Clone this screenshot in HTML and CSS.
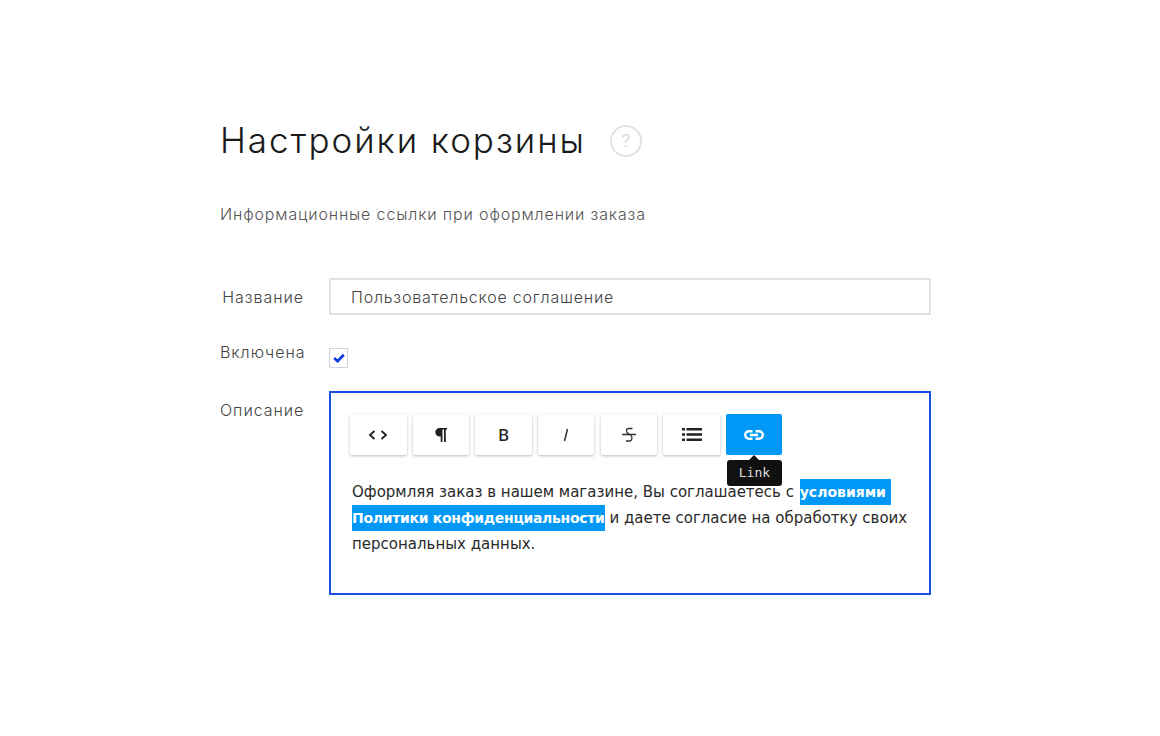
FILE: index.html
```html
<!DOCTYPE html>
<html lang="ru">
<head>
<meta charset="utf-8">
<title>Настройки корзины</title>
<link rel="stylesheet" href="styles.css">
</head>
<body>
<main class="page">
  <header class="title-row">
    <h1 class="title">Настройки корзины</h1>
    <span class="help">?</span>
  </header>
  <p class="subtitle">Информационные ссылки при оформлении заказа</p>
  <div class="form">
    <div class="row row-name">
      <label class="label">Название</label>
      <div class="input">Пользовательское соглашение</div>
    </div>
    <div class="row row-check">
      <label class="label">Включена</label>
      <span class="checkbox">
        <svg width="12" height="10" viewBox="0 0 12 10"><path d="M1.2 5 4.600 8.200 10.800 1.800" fill="none" stroke="#0b3be8" stroke-width="2.700"/></svg>
      </span>
    </div>
    <div class="row row-desc">
      <label class="label label-desc">Описание</label>
      <div class="editor">
        <div class="toolbar">
          <button class="tool">
            <svg width="20" height="12" viewBox="0 0 20 12"><path d="M6.5 2 2 6l4.500 4M13.500 2 18 6l-4.500 4" fill="none" stroke="#222" stroke-width="1.800"/></svg>
          </button>
          <button class="tool">
            <svg width="12" height="14" viewBox="0 0 12 14"><path d="M4.500 0H12v1.500h-1.200V14H9V1.500H7.500V14H5.700V8.400H4.500a4.200 4.200 0 0 1 0-8.400Z" fill="#222"/></svg>
          </button>
          <button class="tool tool-text">B</button>
          <button class="tool">
            <svg width="8" height="14" viewBox="0 0 8 14"><path d="M5.500 1 2.500 13" fill="none" stroke="#333" stroke-width="1.500"/></svg>
          </button>
          <button class="tool">
            <svg width="16" height="16" viewBox="0 0 16 16"><path d="M11.500 1.500H7.500C5 1.500 4.500 5 7.500 6.500L9.500 8c2.500 1.500 1.500 6-1 6H5M1 7.500h14" fill="none" stroke="#333" stroke-width="1.300"/></svg>
          </button>
          <button class="tool">
            <svg width="20" height="13" viewBox="0 0 20 13"><path d="M0 0h3v2.500H0zM0 5.250h3v2.500H0zM0 10.500h3V13H0zM4.500 0H20v2.500H4.500zM4.500 5.250H20v2.500H4.500zM4.500 10.500H20V13H4.500z" fill="#222"/></svg>
          </button>
          <div class="tool-wrap">
            <button class="tool tool-active">
              <svg width="20" height="10" viewBox="0 0 20 10"><path d="M8.500 1.200H5a3.800 3.800 0 0 0 0 7.600h3.500M11.500 1.200H15a3.800 3.800 0 0 1 0 7.600h-3.500M6 5h8" fill="none" stroke="#fff" stroke-width="2.400"/></svg>
            </button>
            <span class="tooltip">Link</span>
          </div>
        </div>
        <p class="content">Оформляя заказ в нашем магазине, Вы соглашаетесь с <a class="link link-first">условиями</a> <a class="link link-second">Политики конфиденциальности</a> и даете согласие на обработку своих персональных данных.</p>
      </div>
    </div>
  </div>
</main>
</body>
</html>
```

FILE: styles.css
```css
* { box-sizing: border-box; }
html, body { margin: 0; padding: 0; background: #fff; }
body { width: 1160px; height: 736px; overflow: hidden; font-family: "Inter", "Liberation Sans", sans-serif; color: #222; }
.page { padding: 117px 0 0 220px; width: 931px; }
.title-row { display: flex; align-items: center; height: 46px; gap: 24px; }
.title { margin: 0; font-weight: 300; font-size: 35px; letter-spacing: 1.950px; line-height: 46px; color: #1a1a1a; }
.help { width: 32px; height: 32px; margin-top: 2px; border: 2px solid #e2e2e2; border-radius: 50%; display: flex; align-items: center; justify-content: center; color: #d0d0d0; font-size: 17px; font-weight: 300; }
.subtitle { margin: 39px 0 0; font-size: 16px; font-weight: 300; line-height: 24px; color: #555; letter-spacing: 0.850px; }
.form { margin-top: 52px; display: flex; flex-direction: column; }
.row { display: flex; gap: 25px; }
.label { width: 84px; flex: none; text-align: right; font-size: 16px; font-weight: 300; color: #444; line-height: 24px; white-space: nowrap; letter-spacing: 0.950px; }
.row-name { align-items: center; }
.row-name .label { margin-top: 1px; }
.input { flex: 1; height: 37px; border: 2px solid #e2e2e2; padding-left: 20px; font-size: 16px; font-weight: 300; line-height: 34px; color: #444; letter-spacing: 0.800px; }
.row-check { margin-top: 25px; height: 28px; }
.checkbox { width: 19px; height: 20px; margin-top: 8px; border: 1px solid #d4d4d4; display: flex; align-items: center; justify-content: center; }
.row-desc { margin-top: 23px; }
.label-desc { margin-top: 7px; }
.editor { flex: 1; min-width: 0; height: 204px; border: 2px solid #1d50e0; padding: 21px 19px 0 19px; }
.toolbar { display: flex; gap: 6.160px; }
.tool { width: 56.500px; height: 41px; padding: 0; border: 0; border-radius: 2px; background: #fff; box-shadow: 0 1px 3px rgba(0,0,0,.28); display: flex; align-items: center; justify-content: center; }
.tool-text { font-family: "Noto Sans", sans-serif; color: #222; font-size: 17px; font-weight: 500; }
.tool-wrap { position: relative; }
.tool-active { background: #0098f7; box-shadow: none; }
.tooltip { position: absolute; left: 1px; top: 46px; width: 55px; height: 26px; background: #111; color: #ddd; border-radius: 3px; font-family: "DejaVu Sans Mono", monospace; font-size: 13px; line-height: 26px; text-align: center; }
.tooltip::before { content: ""; position: absolute; left: 22.500px; top: -5px; border: 5px solid transparent; border-top: 0; border-bottom-color: #111; }
.content { margin: 24px 0 0 2px; font-family: "DejaVu Sans", sans-serif; font-size: 15px; line-height: 26px; color: #2a2a2a; }
.link { display: inline-block; height: 26px; background: #0098f7; color: #fff; font-weight: 700; font-size: 14px; vertical-align: top; }
.link-first { padding-right: 5px; margin-left: 1px; }
.link-second { letter-spacing: -0.300px; }
```
